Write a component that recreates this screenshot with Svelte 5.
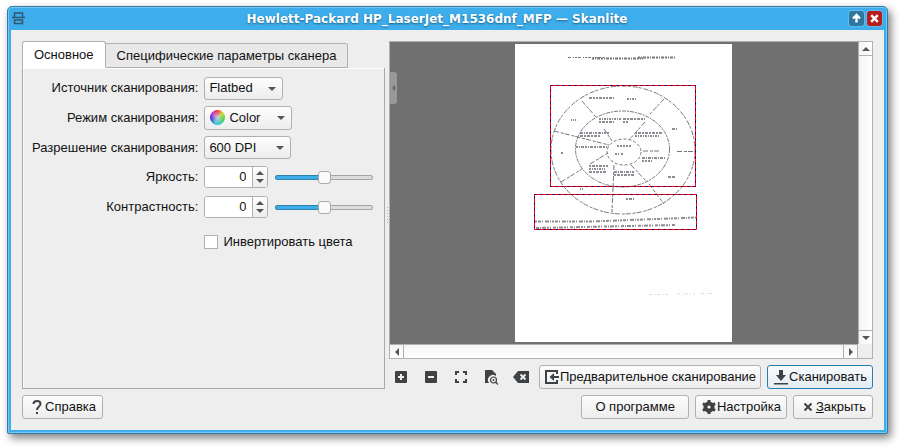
<script lang="ts">
  let tab = $state('main');
  let source = $state('Flatbed');
  let mode = $state('Color');
  let resolution = $state('600 DPI');
  let brightness = $state(0);
  let contrast = $state(0);
  let invert = $state(false);

  // unreadable captions on the scanned page: x, y, width, dash pattern
  const captions: [number, number, number, string][] = [
    [74, 54, 25, '3 1 2 1 2 1'],
    [112, 55, 9, '2 1 1 1'],
    [56, 76, 5, '1 1'],
    [84, 75, 22, '2 1 1 1'],
    [108, 75, 22, '3 1 2 1'],
    [84, 78, 15, '2 1 3 1'],
    [108, 78, 5, '2 1'],
    [65, 89, 29, '3 1 1 1 2 1'],
    [65, 92, 20, '3 1 2 1'],
    [120, 89, 27, '2 1 3 1'],
    [120, 92, 24, '2 1 1 1'],
    [157, 85, 5, '3 1'],
    [61, 103, 31, '2 1 1 1 3 1'],
    [102, 102, 14, '2 1'],
    [100, 110, 9, '2 1 1 2'],
    [127, 114, 24, '3 1 1 1'],
    [127, 117, 10, '2 1'],
    [46, 109, 3, '2 1'],
    [74, 122, 19, '2 1 3 1'],
    [74, 125, 16, '2 1 1 1'],
    [74, 128, 18, '3 1 2 1'],
    [99, 128, 20, '3 1 1 1'],
    [99, 131, 20, '2 1 3 1'],
    [153, 133, 7, '3 1'],
    [65, 145, 4, '1 1'],
    [111, 155, 8, '2 1 3 1'],
  ];
</script>

{#snippet spin(id: string, get: () => number, set: (v: number) => void)}
  <span class="spin">
    <input {id} type="text" inputmode="numeric" value={get()} onchange={(e) => set(Number(e.currentTarget.value) || 0)} />
    <span class="steps">
      <button aria-label="Увеличить" onclick={() => set(Math.min(100, get() + 1))}>
        <svg width="8" height="4"><path d="M0,4 L4,0 L8,4 Z" /></svg>
      </button>
      <button aria-label="Уменьшить" onclick={() => set(Math.max(-100, get() - 1))}>
        <svg width="8" height="4"><path d="M0,0 L4,4 L8,0 Z" /></svg>
      </button>
    </span>
  </span>
{/snippet}

<div class="window">
  <header>
    <svg class="app-icon" width="13" height="13" viewBox="0 0 13 13" aria-hidden="true">
      <path d="M2.5,5 V1 H10.5 V5 M0,5.5 H13 M2.5,8 V11.5 H10.5 V8 Z" />
    </svg>
    <h1>Hewlett-Packard HP_LaserJet_M1536dnf_MFP — Skanlite</h1>
    <button class="wm" aria-label="Развернуть">
      <svg width="15" height="15" viewBox="0 0 15 15">
        <path d="M7.5,11.5 V5 M4,7.5 L7.5,4 L11,7.5" />
      </svg>
    </button>
    <button class="wm close" aria-label="Закрыть окно">
      <svg width="15" height="15" viewBox="0 0 15 15">
        <path d="M4.2,4.2 L10.8,10.8 M10.8,4.2 L4.2,10.8" />
      </svg>
    </button>
  </header>

  <main>
    <div class="columns">
      <section class="settings">
        <div class="tabs" role="tablist">
          <button role="tab" aria-selected={tab === 'main'} class:active={tab === 'main'} onclick={() => (tab = 'main')}>Основное</button>
          <button role="tab" aria-selected={tab === 'device'} class:active={tab === 'device'} onclick={() => (tab = 'device')}>Специфические параметры сканера</button>
        </div>
        <div class="panel" role="tabpanel">
          <label for="source">Источник сканирования:</label>
          <span class="combo">
            <select id="source" class="source" bind:value={source}>
              <option>Flatbed</option>
            </select>
          </span>
          <label for="mode">Режим сканирования:</label>
          <span class="combo">
            <i class="wheel"></i>
            <select id="mode" class="mode" bind:value={mode}>
              <option>Color</option>
            </select>
          </span>
          <label for="resolution">Разрешение сканирования:</label>
          <span class="combo">
            <select id="resolution" class="resolution" bind:value={resolution}>
              <option>600 DPI</option>
            </select>
          </span>
          <label for="brightness">Яркость:</label>
          <div class="level">
            {@render spin('brightness', () => brightness, (v) => (brightness = v))}
            <input type="range" aria-label="Яркость" min="-100" max="100" bind:value={brightness} style:--fill="{(brightness + 100) / 2}%" />
          </div>
          <label for="contrast">Контрастность:</label>
          <div class="level">
            {@render spin('contrast', () => contrast, (v) => (contrast = v))}
            <input type="range" aria-label="Контрастность" min="-100" max="100" bind:value={contrast} style:--fill="{(contrast + 100) / 2}%" />
          </div>
          <label class="check">
            <input type="checkbox" bind:checked={invert} />
            Инвертировать цвета
          </label>
        </div>
      </section>

      <div class="splitter"><i></i></div>

      <section class="preview">
        <div class="view">
          <div class="canvas">
            <button class="handle" aria-label="Свернуть панель">
              <svg width="3" height="6"><path d="M3,0 L0,3 L3,6 Z" /></svg>
            </button>
            <svg class="paper" width="217" height="298" viewBox="0 0 217 298">
              <rect width="217" height="298" fill="#fefefe" />
              <g class="ink">
                <path d="M53,13.5 H90" stroke-dasharray="3 2 1 1 2 1" />
                <path d="M77,14.5 H128 M123,13.5 H160" stroke-width="2" stroke-dasharray="2 1 1 1 3 1" />
                <ellipse cx="108" cy="106" rx="72" ry="64" stroke-dasharray="5 1 3 2" />
                <ellipse cx="107.5" cy="105" rx="47" ry="38" stroke-dasharray="4 1 2 1" />
                <ellipse cx="109" cy="108" rx="17" ry="13" stroke-dasharray="3 2" />
                <path d="M67,57 L81,73 M149,55 L135,70 M130,78 L114,96 M39,87 L94,101 M46,138 L67,125 M75,120 L93,109 M99,121 L97,168 M116,121 L132,138 M134,140 L149,160 M128,107 H145 M162,107.5 H179 M89,85 L97,97" stroke-dasharray="5 2 3 1" />
              </g>
              <g class="captions">
                {#each captions as [x, y, w, dash]}
                  <path d="M{x},{y} h{w}" stroke-dasharray={dash} />
                {/each}
                <path d="M20,177.5 H75 L182,173.5" stroke-dasharray="2 1 3 1 1 2 4 1 1 1" />
                <path d="M21,184 L160,181" stroke-dasharray="3 1 1 1 4 1 2 1 1 2" />
              </g>
              <path class="faint" d="M134,250.5 H155 M162,250 H180 M186,249.5 H197" stroke-dasharray="3 2 1 2" />
              <g class="selection">
                <path class="base" d="M35.5,41.5 H180.5 V142.5 H35.5 Z M19.5,150.5 H181.5 V185.5 H19.5 Z" />
                <path class="dash" d="M35.5,41.5 H180.5 V142.5 H35.5 Z M19.5,150.5 H181.5 V185.5 H19.5 Z" />
              </g>
            </svg>
          </div>
          <div class="bar vertical">
            <button aria-label="Вверх"><svg width="8" height="4"><path d="M0,4 L4,0 L8,4 Z" /></svg></button>
            <button aria-label="Вниз"><svg width="8" height="4"><path d="M0,0 L4,4 L8,0 Z" /></svg></button>
          </div>
          <div class="bar">
            <button aria-label="Влево"><svg width="4" height="8"><path d="M4,0 L0,4 L4,8 Z" /></svg></button>
            <button aria-label="Вправо"><svg width="4" height="8"><path d="M0,0 L4,4 L0,8 Z" /></svg></button>
          </div>
        </div>

        <div class="tools">
          <button class="tool" aria-label="Увеличить масштаб">
            <svg width="16" height="16" viewBox="0 0 16 16">
              <rect x="2" y="2" width="12" height="12" rx="1" />
              <path class="cut" d="M8,5 V11 M5,8 H11" />
            </svg>
          </button>
          <button class="tool" aria-label="Уменьшить масштаб">
            <svg width="16" height="16" viewBox="0 0 16 16">
              <rect x="2" y="2" width="12" height="12" rx="1" />
              <path class="cut" d="M5,8 H11" />
            </svg>
          </button>
          <button class="tool" aria-label="Масштаб по выделению">
            <svg width="16" height="16" viewBox="0 0 16 16">
              <path class="line" d="M3,6 V3 H6 M10,3 H13 V6 M13,10 V13 H10 M6,13 H3 V10" />
            </svg>
          </button>
          <button class="tool" aria-label="Масштаб по размеру окна">
            <svg width="16" height="16" viewBox="0 0 16 16">
              <path d="M2,1 H9 L13,5 V7 A5,5 0 0 0 6,14 H2 Z" />
              <circle class="thin" cx="10.5" cy="11" r="3" />
              <path class="thin" d="M12.5,13 L15,15.5" />
              <circle cx="10.5" cy="11" r="1" />
            </svg>
          </button>
          <button class="tool" aria-label="Очистить выделение">
            <svg width="16" height="16" viewBox="0 0 16 16">
              <path d="M0,8 L5,2 H16 V14 H5 Z" />
              <path class="cut" d="M7.5,5.5 L12.5,10.5 M12.5,5.5 L7.5,10.5" />
            </svg>
          </button>
          <button class="push grow">
            <svg width="16" height="16" viewBox="0 0 16 16">
              <path class="line" d="M13,5 V2 H2 V14 H13 V11 M15,8 H8" />
              <path d="M5.5,8 L10,4 V12 Z" />
            </svg>
            Предварительное сканирование
          </button>
          <button class="push default">
            <svg width="16" height="16" viewBox="0 0 16 16">
              <path d="M6,1 H10 V6 H13 L8,12 L3,6 H6 Z M1,14 H15 V15.5 H1 Z" />
            </svg>
            Сканировать
          </button>
        </div>
      </section>
    </div>

    <footer>
      <button class="push help">
        <svg width="16" height="16" viewBox="0 0 16 16">
          <path class="line" d="M4.5,5 C4.5,1 11.5,1 11.5,5 C11.5,7.5 8,7.5 8,11" />
          <rect x="7" y="13" width="2" height="2" />
        </svg>
        Справка
      </button>
      <button class="push about">О программе</button>
      <button class="push">
        <svg width="16" height="16" viewBox="0 0 16 16">
          <circle class="hub" cx="8" cy="8" r="3.6" />
          <path class="teeth" d="M8,1 V4 M8,12 V15 M1.9,4.5 L4.5,6 M11.5,10 L14.1,11.5 M1.9,11.5 L4.5,10 M11.5,6 L14.1,4.5" />
        </svg>
        Настройка
      </button>
      <button class="push exit">
        <svg width="16" height="16" viewBox="0 0 16 16">
          <path class="line" d="M4.5,4.5 L11.5,11.5 M11.5,4.5 L4.5,11.5" />
        </svg>
        <span><u>З</u>акрыть</span>
      </button>
    </footer>
  </main>
</div>

<style>
  :global(body) {
    background: #fff;
    overflow: hidden;
  }
  .window {
    --line: #b0b0b0;
    --icon: #3f4245;
    --button: linear-gradient(#fdfdfd, #ededed);
    margin: 6px 13px 14px 7px;
    padding: 0 3px 3px;
    border: 1px solid #2a7dae;
    border-radius: 5px 5px 2px 2px;
    background: #3daeeb;
    box-shadow: inset 0 0 0 1px #7cc6ef, 3px 4px 8px rgba(0, 0, 0, 0.5);
    font: 13px/16px 'Liberation Sans', Arial, sans-serif;
    color: #121212;
  }
  button,
  select,
  input {
    font: inherit;
    color: inherit;
    margin: 0;
    box-sizing: border-box;
  }
  button {
    padding: 0;
    border: none;
    background: none;
  }
  svg {
    display: block;
    flex: none;
    fill: #555;
  }
  header {
    display: flex;
    align-items: center;
    gap: 3px;
    height: 23px;
    padding: 0 2px 0 1px;
  }
  .app-icon {
    fill: none;
    stroke: #33566c;
    stroke-width: 1.5;
  }
  h1 {
    flex: 1;
    margin: 0;
    text-align: center;
    font: bold 12px/20px 'DejaVu Sans', sans-serif;
    color: #fff;
    text-shadow: 0 1px 2px #1a5c85;
    white-space: nowrap;
  }
  .wm {
    border-radius: 3px;
    background: #2b779f;
    box-shadow: 0 0 0 1px #63b9e8;
  }
  .wm.close {
    background: #b81c1c;
  }
  .wm svg {
    fill: none;
    stroke: #fff;
    stroke-width: 2.4;
  }
  main {
    display: flex;
    flex-direction: column;
    gap: 6px;
    padding: 11px;
    background: #eee;
  }
  .columns {
    display: flex;
  }
  .settings {
    display: flex;
    flex-direction: column;
    flex: 3 1 0;
    min-width: 0;
  }
  .tabs {
    display: flex;
    align-items: flex-end;
    height: 27px;
    z-index: 1;
  }
  .tabs button {
    height: 25px;
    padding: 0 11px;
    border: 1px solid var(--line);
    border-left: none;
    border-radius: 0 3px 0 0;
    background: #e8e8e8;
    white-space: nowrap;
  }
  .tabs button.active {
    height: 27px;
    border: 1px solid var(--line);
    border-bottom-color: #fff;
    border-radius: 3px 3px 0 0;
    background: #fff;
  }
  .panel {
    flex: 1;
    display: grid;
    grid-template-columns: auto minmax(0, 1fr);
    grid-template-rows: 24px 24px 23px 24px 24px 24px;
    align-items: center;
    gap: 6px;
    padding: 8px 11px 8px 9px;
    border: 1px solid #a8a8a8;
    border-top: none;
    box-shadow: inset 0 1px #fff, inset 1px 0 #fafafa;
  }
  .panel > label {
    text-align: right;
    white-space: nowrap;
  }
  .combo {
    position: relative;
    justify-self: start;
    display: block;
  }
  .combo::after {
    content: '';
    position: absolute;
    right: 7px;
    top: 10px;
    border: 4px solid transparent;
    border-top-color: #555;
    border-bottom: none;
    pointer-events: none;
  }
  select {
    appearance: none;
    display: block;
    height: 23px;
    padding: 0 4px;
    border: 1px solid var(--line);
    border-radius: 3px;
    background: var(--button);
  }
  .source {
    width: 79px;
  }
  .mode {
    width: 88px;
    height: 24px;
    padding-left: 24px;
  }
  .resolution {
    width: 87px;
  }
  .wheel {
    position: absolute;
    left: 6px;
    top: 4px;
    width: 15px;
    height: 15px;
    border-radius: 50%;
    background: radial-gradient(#ccc, transparent 70%), conic-gradient(#f22, #cd2, #3d3, #2cb, #3bd, #22e, #b2d, #f22);
  }
  .level {
    display: flex;
    align-items: center;
    gap: 7px;
  }
  .spin {
    display: flex;
    width: 64px;
    height: 22px;
    box-sizing: border-box;
    border: 1px solid var(--line);
    border-radius: 3px;
    background: #fff;
    overflow: hidden;
  }
  .spin input {
    flex: 1;
    min-width: 0;
    padding: 0 6px 0 0;
    border: none;
    outline: none;
    text-align: right;
  }
  .steps {
    width: 14px;
    display: flex;
    flex-direction: column;
    justify-content: center;
    gap: 4px;
    border-left: 1px solid var(--line);
    background: var(--button);
  }
  .steps svg {
    margin: 0 auto;
  }
  input[type='range'] {
    appearance: none;
    flex: 1;
    min-width: 0;
    height: 14px;
    background: none;
  }
  input[type='range']::-webkit-slider-runnable-track {
    height: 5px;
    border: 1px solid #b4b4b4;
    border-radius: 3px;
    background: linear-gradient(90deg, #3daee9 var(--fill), #dcdcdc var(--fill));
    background-origin: border-box;
    box-sizing: border-box;
    border-color: rgba(0, 0, 0, 0.25);
  }
  input[type='range']::-webkit-slider-thumb {
    appearance: none;
    box-sizing: border-box;
    width: 13px;
    height: 13px;
    margin-top: -5px;
    border: 1px solid #aaa;
    border-radius: 3px;
    background: #fafafa;
  }
  .panel .check {
    grid-column: 2;
    display: flex;
    align-items: center;
    gap: 5px;
    margin-top: 9px;
  }
  input[type='checkbox'] {
    appearance: none;
    width: 14px;
    height: 14px;
    border: 1px solid var(--line);
    background: #fff;
  }
  input[type='checkbox']:checked {
    background: #3daee9;
  }
  .splitter {
    display: flex;
    align-items: center;
    width: 4px;
  }
  .splitter i {
    width: 1px;
    height: 16px;
    margin: 0 auto;
    background: repeating-linear-gradient(#aaa 0 1px, transparent 1px 3px);
  }
  .preview {
    flex: 4 1 0;
    min-width: 0;
    display: flex;
    flex-direction: column;
    gap: 6px;
  }
  .view {
    display: grid;
    grid-template-columns: 1fr 14px;
    grid-template-rows: auto 14px;
    border: 1px solid var(--line);
  }
  .canvas {
    position: relative;
    display: flex;
    justify-content: center;
    padding: 2px 1px 2px 0;
    background: #707070;
  }
  .handle {
    position: absolute;
    left: 0;
    top: 30px;
    width: 7px;
    height: 32px;
    border-radius: 0 3px 3px 0;
    background: #989898;
  }
  .handle svg {
    margin: 0 auto;
    fill: #666;
  }
  .ink,
  .captions {
    fill: none;
    stroke: #77777c;
    stroke-width: 1;
  }
  .captions {
    stroke: #8c8c94;
    stroke-width: 2;
  }
  .faint {
    stroke: #ddd;
  }
  .selection {
    fill: none;
  }
  .base {
    stroke: #f00;
  }
  .dash {
    stroke: #000080;
    stroke-dasharray: 2 4;
  }
  .bar {
    display: flex;
    justify-content: space-between;
    border-top: 1px solid var(--line);
    background: linear-gradient(#f4f4f4, #fff);
  }
  .bar button {
    display: grid;
    place-items: center;
    width: 14px;
    border-right: 1px solid var(--line);
  }
  .bar button:last-child {
    border-right: none;
    border-left: 1px solid var(--line);
  }
  .bar.vertical {
    flex-direction: column;
    border-top: none;
    border-left: 1px solid var(--line);
    background: linear-gradient(90deg, #f4f4f4, #fff);
  }
  .bar.vertical button {
    width: auto;
    height: 14px;
    border: none;
    border-bottom: 1px solid var(--line);
  }
  .bar.vertical button:last-child {
    border-top: 1px solid var(--line);
    border-bottom: none;
  }
  .bar:last-child {
    border-right: 1px solid var(--line);
  }
  .tools,
  footer {
    display: flex;
    gap: 6px;
  }
  .tool {
    flex: none;
    display: grid;
    place-items: center;
    width: 24px;
    height: 24px;
  }
  .tool svg,
  .push svg {
    fill: var(--icon);
  }
  svg .cut {
    fill: none;
    stroke: #eee;
    stroke-width: 2;
  }
  svg .line {
    fill: none;
    stroke: var(--icon);
    stroke-width: 2;
  }
  .thin {
    fill: none;
    stroke: var(--icon);
    stroke-width: 1.2;
  }
  .hub {
    fill: none;
    stroke: var(--icon);
    stroke-width: 4;
  }
  .teeth {
    stroke: var(--icon);
    stroke-width: 3;
  }
  .push {
    display: flex;
    align-items: center;
    justify-content: center;
    height: 24px;
    padding: 0 5px;
    border: 1px solid var(--line);
    border-radius: 3px;
    background: var(--button);
    white-space: nowrap;
  }
  .grow {
    flex: 1;
    padding: 0;
  }
  .default {
    border-color: #2a7dae;
    background: linear-gradient(#f8fbfd, #e2ecf2);
  }
  .help,
  .exit {
    padding: 0 6px;
  }
  .help {
    margin-right: auto;
  }
  .about {
    padding: 0 13px;
  }
</style>
